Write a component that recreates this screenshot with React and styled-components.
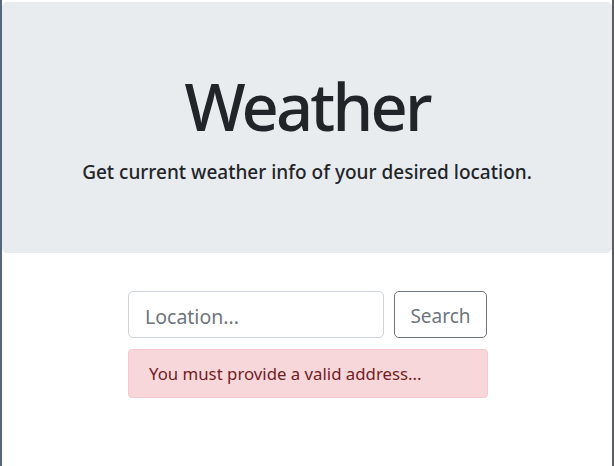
import React from "react";
import styled, { createGlobalStyle } from "styled-components";

const GlobalStyle = createGlobalStyle({
  "*": { boxSizing: "border-box" },
  body: {
    margin: 0,
    background: "#ffffff",
    fontFamily: '"Noto Sans", "Open Sans", sans-serif',
    color: "#212529",
  },
});

const Window = styled.div({
  height: "466px",
  paddingTop: "2px",
  borderLeft: "2px solid #56677d",
  borderRight: "2px solid #5b5d60",
  background: "#ffffff",
  overflow: "hidden",
});

const Jumbotron = styled.header({
  background: "#e9ecef",
  borderRadius: "5px",
  height: "251px",
  display: "flex",
  flexDirection: "column",
  alignItems: "center",
  paddingTop: "64px",
});

const Title = styled.h1({
  margin: 0,
  fontSize: "65px",
  fontWeight: 500,
  lineHeight: "80px",
  letterSpacing: "-2.8px",
  color: "#212529",
});

const Lead = styled.h5({
  margin: "14px 0 0",
  fontSize: "19px",
  fontWeight: 500,
  lineHeight: "24px",
  color: "#212529",
});

const Form = styled.form({
  width: "360px",
  margin: "38px 0 0 calc(50% - 179px)",
  display: "flex",
  flexDirection: "column",
  gap: "11px",
});

const Row = styled.div({
  display: "flex",
  gap: "10px",
});

const Input = styled.input({
  width: "256px",
  height: "47px",
  padding: "3px 16px 0",
  fontFamily: "inherit",
  fontSize: "19.5px",
  color: "#495057",
  border: "1px solid #ced4da",
  borderRadius: "5px",
  outline: "none",
  "&::placeholder": { color: "#6c757d" },
});

const Button = styled.button({
  width: "93px",
  height: "47px",
  padding: "2px 0 0",
  fontFamily: "inherit",
  fontSize: "19px",
  color: "#6c757d",
  background: "transparent",
  border: "1px solid #6c757d",
  borderRadius: "5px",
});

const Alert = styled.div({
  height: "49px",
  padding: "0 20px",
  display: "flex",
  alignItems: "center",
  fontSize: "16.8px",
  color: "#721c24",
  background: "#f8d7da",
  border: "1px solid #f5c6cb",
  borderRadius: "4px",
});

export default function App() {
  return (
    <Window>
      <GlobalStyle />
      <Jumbotron>
        <Title>Weather</Title>
        <Lead>Get current weather info of your desired location.</Lead>
      </Jumbotron>
      <Form onSubmit={(e) => e.preventDefault()}>
        <Row>
          <Input placeholder="Location..." />
          <Button type="submit">Search</Button>
        </Row>
        <Alert>You must provide a valid address...</Alert>
      </Form>
    </Window>
  );
}
